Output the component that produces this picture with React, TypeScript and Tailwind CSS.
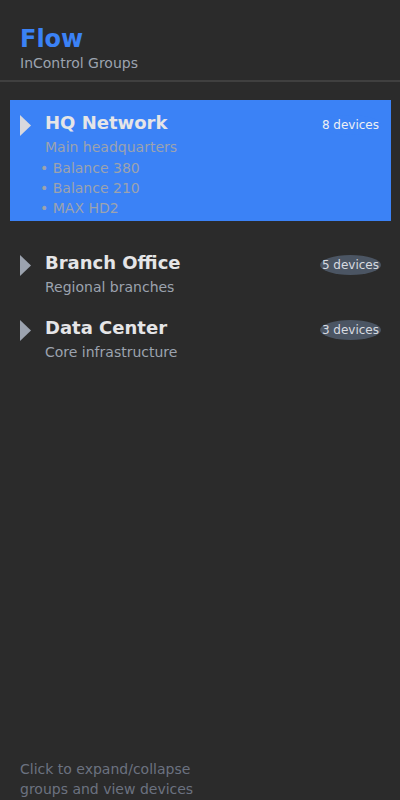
import React from "react";

type Group = {
  name: string;
  desc: string;
  count: number;
  devices: string[];
  open: boolean;
};

const groups: Group[] = [
  { name: "HQ Network", desc: "Main headquarters", count: 8, devices: ["Balance 380", "Balance 210", "MAX HD2"], open: true },
  { name: "Branch Office", desc: "Regional branches", count: 5, devices: [], open: false },
  { name: "Data Center", desc: "Core infrastructure", count: 3, devices: [], open: false },
];

function Triangle({ light }: { light: boolean }) {
  return (
    <svg width="11" height="21" viewBox="0 0 11 21" className="mr-[14px] mt-[6px] shrink-0">
      <polygon points="0,0 11,10.5 0,21" fill={light ? "#d9d9de" : "#9ca3af"} />
    </svg>
  );
}

export default function App() {
  return (
    <div className="flex h-[800px] w-[400px] flex-col bg-[#2b2b2b] font-['DejaVu_Sans',sans-serif]">
      <div className="border-b-2 border-[#404040] px-5 pb-[7px] pt-[26px]">
        <div className="text-2xl font-bold leading-[27px] text-[#3b82f6]">Flow</div>
        <div className="text-sm leading-5 text-[#9ca3af]">InControl Groups</div>
      </div>

      <div className="flex flex-1 flex-col pt-[18px]">
        {groups.map((g, i) => (
          <div
            key={g.name}
            className={
              (g.open ? "bg-[#3b82f6] " : "") +
              (i === 1 ? "mt-[19px] " : i === 2 ? "mt-[5px] " : "") +
              "ml-[10px] mr-[9px] flex items-start pb-[3px] pl-[10px] pr-[10px] pt-[9px]"
            }
          >
            <Triangle light={g.open} />
            <div className="flex min-w-0 flex-1 flex-col">
              <div className="text-lg font-bold leading-7 text-[#e5e5e7]">{g.name}</div>
              <div className="text-sm leading-5 text-[#9ca3af]">{g.desc}</div>
              {g.open && (
                <div className="-ml-[5px] mt-px flex flex-col">
                  {g.devices.map((d) => (
                    <div key={d} className="text-sm leading-5 text-[#9ca3af]">
                      • {d}
                    </div>
                  ))}
                </div>
              )}
            </div>
            <div
              className={
                (g.open ? "bg-[#3b82f6] text-[#eef0f4] " : "bg-[#4b5563] text-[#d8dbe0] ") +
                "mt-[6px] shrink-0 rounded-[50%] px-[2px] py-[2px] text-xs leading-4"
              }
            >
              {g.count} devices
            </div>
          </div>
        ))}
      </div>

      <div className="w-[220px] px-5 pb-px text-sm leading-5 text-[#6b7280]">
        Click to expand/collapse groups and view devices
      </div>
    </div>
  );
}
